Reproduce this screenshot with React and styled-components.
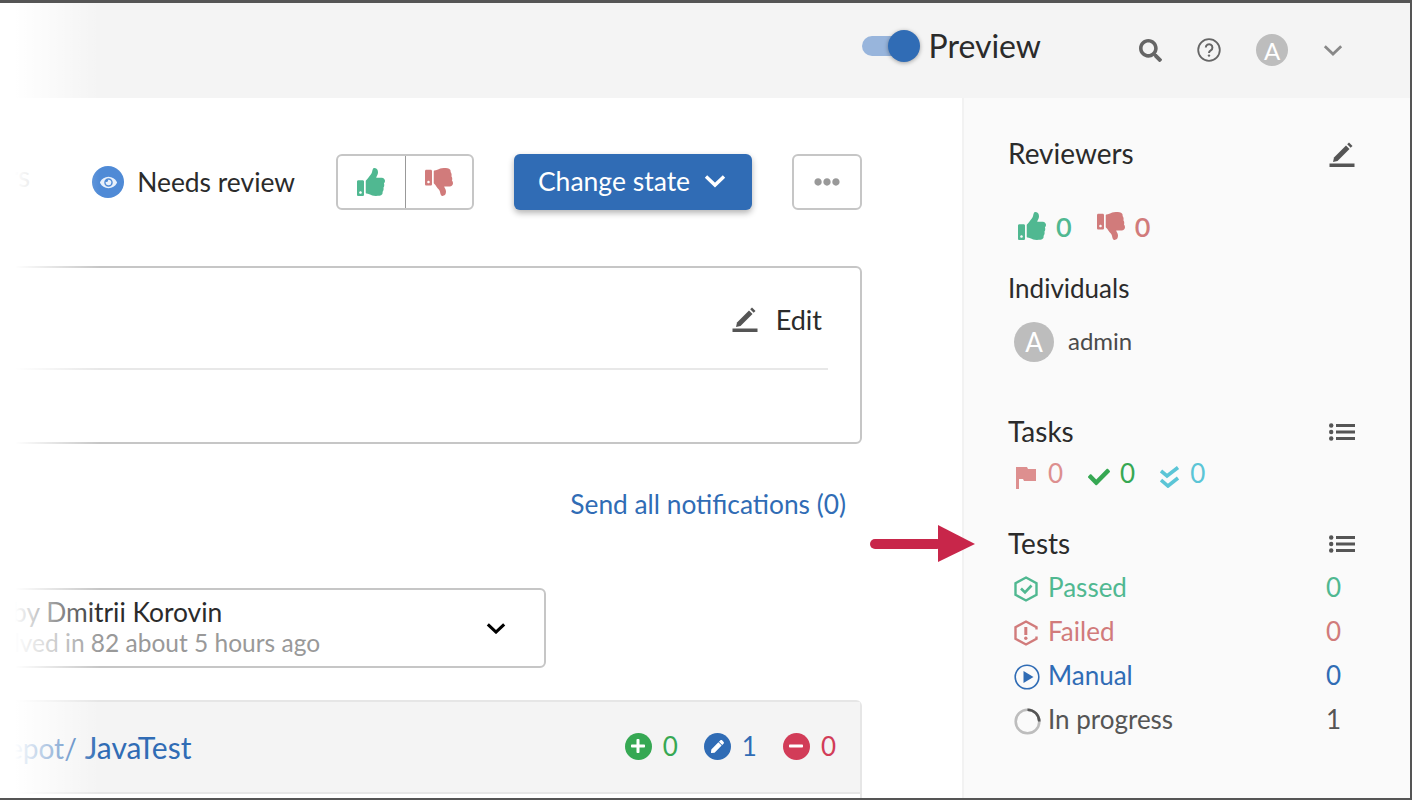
import React from 'react';
import styled, { createGlobalStyle } from 'styled-components';
import { FaThumbsUp, FaThumbsDown, FaSearch, FaCheck, FaEye, FaEllipsisH, FaPlus, FaMinus, FaPen } from 'react-icons/fa';

const colors = {
  text: '#2b2b2b',
  blue: '#306cb5',
  good: '#50b891',
  bad: '#d17b7b',
  green: '#36a853',
  cyan: '#5bc5d6',
  flag: '#dd8f8f',
  crimson: '#d23c58',
  grey: '#555555',
  line: '#c6c6c6',
};

const PenIcon = ({ size = 26 }) => (
  <svg width={size} height={size} viewBox="0 0 26 26" fill="#555">
    <path d="M5 16.5 L17 4.5 L20.5 8 L8.5 20 L4 21 Z" />
    <path d="M18.2 3.3 L20 1.5 L23.5 5 L21.7 6.8 Z" />
    <rect x="0.5" y="22.5" width="25" height="3.5" />
  </svg>
);

const ListIcon = () => (
  <svg width="26" height="18" viewBox="0 0 26 18" fill="#555">
    <circle cx="2.2" cy="2.5" r="2.2" />
    <circle cx="2.2" cy="9" r="2.2" />
    <circle cx="2.2" cy="15.5" r="2.2" />
    <rect x="7" y="1" width="19" height="3" />
    <rect x="7" y="7.5" width="19" height="3" />
    <rect x="7" y="14" width="19" height="3" />
  </svg>
);

const HelpIcon = () => (
  <svg width="24" height="24" viewBox="0 0 24 24" fill="none" stroke="#666" strokeWidth="1.8">
    <circle cx="12" cy="12" r="10.8" />
    <path d="M8.8 9.4a3.3 3.3 0 1 1 5 2.9c-1.2.7-1.8 1.2-1.8 2.6" strokeWidth="2" />
    <circle cx="12" cy="17.6" r="1.2" fill="#666" stroke="none" />
  </svg>
);

const Chevron = ({ color, size = 22, weight = 3 }) => (
  <svg width={size} height={size * 0.64} viewBox="0 0 22 14" fill="none" stroke={color} strokeWidth={weight}>
    <path d="M2 2.5 L11 11 L20 2.5" />
  </svg>
);

const FlagIcon = () => (
  <svg width="22" height="24" viewBox="0 0 22 24" fill={colors.flag}>
    <path d="M0 2 H11 L12 4 H20 V16 H8 L7 14 H3 V24 H0 Z" />
  </svg>
);

const DoubleCheck = () => (
  <svg width="20" height="22" viewBox="0 0 20 22" fill="none" stroke={colors.cyan} strokeWidth="3.6">
    <path d="M1 5 L7 10 L18 1.5" />
    <path d="M1 14 L8 20 L18 12" />
  </svg>
);

const PassedIcon = () => (
  <svg width="24" height="26" viewBox="0 0 24 26" fill="none" stroke={colors.good} strokeWidth="2.4">
    <path d="M12 1.5 L22.5 7.2 V18.8 L12 24.5 L1.5 18.8 V7.2 Z" />
    <path d="M7 12.5 L11 16.5 L17.5 9.5" strokeWidth="2.6" />
  </svg>
);

const FailedIcon = () => (
  <svg width="24" height="26" viewBox="0 0 24 26" fill="none" stroke={colors.bad} strokeWidth="2.4">
    <path d="M22.5 9.5 V7.2 L12 1.5 L1.5 7.2 V18.8 L12 24.5 L22.5 18.8 V16.5" />
    <path d="M11.8 7 V15" strokeWidth="3" />
    <circle cx="11.8" cy="18.3" r="1.7" fill={colors.bad} stroke="none" />
  </svg>
);

const ManualIcon = () => (
  <svg width="26" height="26" viewBox="0 0 26 26" fill="none" stroke={colors.blue} strokeWidth="1.6">
    <circle cx="13" cy="13" r="11.8" />
    <path d="M9.5 7 L19.5 13 L9.5 19 Z" fill={colors.blue} stroke="none" />
  </svg>
);

const ProgressIcon = () => (
  <svg width="27" height="27" viewBox="0 0 27 27" fill="none" strokeWidth="2.6">
    <circle cx="13.5" cy="13.5" r="11.8" stroke="#bdbdbd" />
    <path d="M13.5 1.7 A11.8 11.8 0 0 1 25.3 13.5" stroke="#555" />
  </svg>
);

const Arrow = () => (
  <ArrowWrap>
    <svg width="106" height="38" viewBox="0 0 106 38" fill="#c8264a">
      <rect x="0" y="14" width="72" height="10" rx="5" />
      <path d="M68 0 L105 19 L68 37 Z" />
    </svg>
  </ArrowWrap>
);

const tests = [
  { label: 'Passed', count: 0, color: colors.good, icon: <PassedIcon /> },
  { label: 'Failed', count: 0, color: colors.bad, icon: <FailedIcon /> },
  { label: 'Manual', count: 0, color: colors.blue, icon: <ManualIcon /> },
  { label: 'In progress', count: 1, color: colors.grey, icon: <ProgressIcon /> },
];

const App = () => {
  return (
    <Frame>
      <GlobalStyle />
      <Header>
        <Toggle>
          <ToggleKnob />
        </Toggle>
        <PreviewLabel>Preview</PreviewLabel>
        <HeaderIcons>
          <FaSearch size={23} color="#666" />
          <HelpIcon />
          <Avatar $size={32} $font={24}>A</Avatar>
          <Chevron color="#888" size={20} />
        </HeaderIcons>
      </Header>
      <Body>
        <Main>
          <StatusRow>
            <Faint>rs</Faint>
            <StatusLabel>
              <EyeBadge><FaEye size={17} color="#e8f0fb" /></EyeBadge>
              Needs review
            </StatusLabel>
            <VoteGroup>
              <VoteButton><FaThumbsUp size={28} color={colors.good} /></VoteButton>
              <VoteButton $divided><FaThumbsDown size={28} color={colors.bad} /></VoteButton>
            </VoteGroup>
            <PrimaryButton>
              Change state
              <Chevron color="#fff" size={22} weight={3.4} />
            </PrimaryButton>
            <MoreButton><FaEllipsisH size={26} color="#999" /></MoreButton>
          </StatusRow>

          <DescriptionCard>
            <EditRow>
              <PenIcon />
              <EditText>Edit</EditText>
            </EditRow>
            <Divider />
          </DescriptionCard>

          <NotifyRow>Send all notifications (0)</NotifyRow>

          <RevisionBox>
            <RevisionText>
              <RevisionName>by Dmitrii Korovin</RevisionName>
              <RevisionMeta>lved in 82 about 5 hours ago</RevisionMeta>
            </RevisionText>
            <Chevron color="#000" size={20} weight={3.4} />
          </RevisionBox>

          <FileCard>
            <FileHeader>
              <FilePath><FileDir>epot/</FileDir>JavaTest</FilePath>
              <FileStats>
                <Stat $color={colors.green}>
                  <StatBadge $color={colors.green}><FaPlus size={16} color="#fff" /></StatBadge>0
                </Stat>
                <Stat $color={colors.blue}>
                  <StatBadge $color={colors.blue}><FaPen size={13} color="#fff" /></StatBadge>1
                </Stat>
                <Stat $color={colors.crimson}>
                  <StatBadge $color={colors.crimson}><FaMinus size={16} color="#fff" /></StatBadge>0
                </Stat>
              </FileStats>
            </FileHeader>
          </FileCard>
        </Main>

        <Sidebar>
          <SectionHead>
            <SectionTitle>Reviewers</SectionTitle>
            <PenIcon />
          </SectionHead>
          <VoteCounts>
            <VoteCount $color={colors.good}><FaThumbsUp size={28} />0</VoteCount>
            <VoteCount $color={colors.bad}><FaThumbsDown size={28} />0</VoteCount>
          </VoteCounts>
          <SubHead>Individuals</SubHead>
          <Person>
            <Avatar $size={40} $font={26}>A</Avatar>
            <PersonName>admin</PersonName>
          </Person>

          <TasksHead>
            <SectionTitle>Tasks</SectionTitle>
            <ListIcon />
          </TasksHead>
          <TaskCounts>
            <TaskCount $color={colors.flag}><FlagIcon />0</TaskCount>
            <TaskCount $color={colors.green}><FaCheck size={22} />0</TaskCount>
            <TaskCount $color={colors.cyan}><DoubleCheck />0</TaskCount>
          </TaskCounts>

          <TestsHead>
            <SectionTitle>Tests</SectionTitle>
            <ListIcon />
          </TestsHead>
          <TestList>
            {tests.map(t => (
              <TestRow key={t.label} $color={t.color}>
                <TestIcon>{t.icon}</TestIcon>
                <TestLabel>{t.label}</TestLabel>
                <span>{t.count}</span>
              </TestRow>
            ))}
          </TestList>
        </Sidebar>
        <Arrow />
      </Body>
      <Fade />
    </Frame>
  );
};

const GlobalStyle = createGlobalStyle`
  html, body {
    margin: 0;
    padding: 0;
    background: white;
  }
  body {
    font-family: Lato, "Noto Sans", sans-serif;
    color: ${colors.text};
  }
  * {
    box-sizing: border-box;
  }
`;

const Frame = styled.div`
  position: relative;
  width: 1412px;
  height: 800px;
  overflow: hidden;
  display: flex;
  flex-direction: column;
  border-top: 3px solid ${colors.grey};
  border-right: 2px solid ${colors.grey};
  border-bottom: 2px solid ${colors.grey};
`;

const Fade = styled.div`
  position: absolute;
  left: 0;
  top: -3px;
  bottom: -2px;
  width: 100px;
  background: linear-gradient(to right, #fff 15px, rgba(255, 255, 255, 0) 100%);
  pointer-events: none;
`;

const Header = styled.header`
  flex: 0 0 95px;
  background: #f4f4f4;
  display: flex;
  align-items: center;
  justify-content: flex-end;
  padding: 0 67px 10px 0;
`;

const Toggle = styled.div`
  position: relative;
  width: 50px;
  height: 20px;
  border-radius: 10px;
  background: #98b5dc;
  margin-right: 16px;
`;

const ToggleKnob = styled.div`
  position: absolute;
  right: -8px;
  top: -6px;
  width: 32px;
  height: 32px;
  border-radius: 50%;
  background: ${colors.blue};
  box-shadow: 0 1px 4px rgba(0, 0, 0, 0.35);
`;

const PreviewLabel = styled.div`
  font-size: 32px;
  line-height: 40px;
  margin-right: 98px;
`;

const HeaderIcons = styled.div`
  display: flex;
  align-items: center;
  gap: 35px;
  margin-top: 9px;
`;

const Avatar = styled.div`
  width: ${p => p.$size}px;
  height: ${p => p.$size}px;
  border-radius: 50%;
  background: #bdbdbd;
  color: #fff;
  font-size: ${p => p.$font}px;
  display: flex;
  align-items: center;
  justify-content: center;
`;

const Body = styled.div`
  position: relative;
  flex: 1;
  display: flex;
  min-height: 0;
`;

const Main = styled.main`
  flex: 0 0 962px;
  background: #fff;
  padding: 56px 100px 0 0;
  overflow: hidden;
`;

const StatusRow = styled.div`
  display: flex;
  align-items: center;
  justify-content: flex-end;
  gap: 40px;
  height: 56px;
`;

const Faint = styled.span`
  font-size: 28px;
  color: #999;
  margin-right: auto;
  padding-left: 8px;
  margin-top: -12px;
`;

const StatusLabel = styled.div`
  display: flex;
  align-items: center;
  gap: 13px;
  font-size: 26.4px;
  margin-right: 1px;
`;

const EyeBadge = styled.span`
  width: 32px;
  height: 32px;
  border-radius: 50%;
  background: #4f8ad6;
  display: flex;
  align-items: center;
  justify-content: center;
`;

const VoteGroup = styled.div`
  display: flex;
  width: 138px;
  height: 56px;
  border: 2px solid ${colors.line};
  border-radius: 6px;
`;

const VoteButton = styled.div`
  flex: 1;
  display: flex;
  align-items: center;
  justify-content: center;
  border-left: ${p => (p.$divided ? '1px solid #999' : 'none')};
`;

const PrimaryButton = styled.div`
  width: 238px;
  height: 56px;
  border-radius: 6px;
  background: ${colors.blue};
  color: #fff;
  font-size: 26.5px;
  display: flex;
  align-items: center;
  justify-content: center;
  gap: 14px;
  padding: 0 2px 2px 0;
  box-shadow: 0 3px 6px rgba(0, 0, 0, 0.3);
`;

const MoreButton = styled.div`
  width: 70px;
  height: 56px;
  border: 2px solid ${colors.line};
  border-radius: 6px;
  display: flex;
  align-items: center;
  justify-content: center;
`;

const DescriptionCard = styled.section`
  margin: 56px 0 0 -4px;
  height: 178px;
  border: 2px solid ${colors.line};
  border-radius: 6px;
  padding: 35px 32px 0 0;
`;

const EditRow = styled.div`
  display: flex;
  align-items: center;
  justify-content: flex-end;
  gap: 18px;
  height: 32px;
  padding-right: 6px;
`;

const EditText = styled.span`
  font-size: 27px;
`;

const Divider = styled.div`
  height: 2px;
  background: #e8e8e8;
  margin-top: 33px;
`;

const NotifyRow = styled.div`
  margin-top: 44px;
  padding-right: 16px;
  text-align: right;
  font-size: 26.3px;
  line-height: 32px;
  color: ${colors.blue};
`;

const RevisionBox = styled.div`
  display: flex;
  align-items: center;
  justify-content: space-between;
  width: 550px;
  height: 80px;
  margin: 68px 0 0 -4px;
  padding: 0 38px 0 14px;
  border: 2px solid ${colors.line};
  border-radius: 6px;
`;

const RevisionText = styled.div`
  display: flex;
  flex-direction: column;
  margin-top: -2px;
`;

const RevisionName = styled.span`
  font-size: 26.4px;
  line-height: 32px;
`;

const RevisionMeta = styled.span`
  font-size: 24.5px;
  line-height: 30px;
  color: #999;
  margin-left: 2px;
`;

const FileCard = styled.section`
  margin: 32px 0 0 -4px;
  height: 200px;
  border: 2px solid #e6e6e6;
  border-radius: 6px;
`;

const FileHeader = styled.div`
  height: 92px;
  background: #f4f4f4;
  border-bottom: 2px solid #e6e6e6;
  display: flex;
  align-items: center;
  justify-content: space-between;
  padding: 0 24px 0 10px;
`;

const FilePath = styled.div`
  font-size: 30px;
  color: ${colors.blue};
`;

const FileDir = styled.span`
  font-size: 28px;
  margin-right: 8px;
`;

const FileStats = styled.div`
  display: flex;
  gap: 26px;
  margin-top: -2px;
`;

const Stat = styled.div`
  display: flex;
  align-items: center;
  gap: 11px;
  font-size: 26px;
  color: ${p => p.$color};
`;

const StatBadge = styled.span`
  width: 27px;
  height: 27px;
  border-radius: 50%;
  background: ${p => p.$color};
  display: flex;
  align-items: center;
  justify-content: center;
`;

const Sidebar = styled.aside`
  flex: 1;
  background: #fafafa;
  border-left: 2px solid #f2f2f2;
  padding: 36px 55px 0 44px;
`;

const SectionHead = styled.div`
  display: flex;
  align-items: center;
  justify-content: space-between;
  height: 40px;
`;

const SectionTitle = styled.h3`
  margin: -2px 0 0;
  font-size: 28px;
  font-weight: 400;
`;

const VoteCounts = styled.div`
  display: flex;
  gap: 25px;
  margin: 32px 0 0 10px;
  height: 40px;
  align-items: center;
`;

const VoteCount = styled.div`
  display: flex;
  align-items: center;
  gap: 10px;
  font-size: 27px;
  font-weight: 600;
  color: ${p => p.$color};
`;

const SubHead = styled.div`
  margin-top: 26px;
  font-size: 26px;
  line-height: 32px;
`;

const Person = styled.div`
  display: flex;
  align-items: center;
  gap: 14px;
  margin: 18px 0 0 6px;
`;

const PersonName = styled.span`
  font-size: 24px;
  color: #4a4a4a;
  margin-top: -3px;
`;

const TasksHead = styled(SectionHead)`
  margin-top: 50px;
`;

const TestsHead = styled(SectionHead)`
  margin-top: 33px;
`;

const TaskCounts = styled.div`
  display: flex;
  gap: 25px;
  margin: 3px 0 0 8px;
  height: 36px;
  align-items: center;
`;

const TaskCount = styled.div`
  display: flex;
  align-items: center;
  gap: 10px;
  font-size: 26px;
  line-height: 28px;
  color: ${p => p.$color};

  svg {
    margin-top: 8px;
  }
`;

const TestList = styled.div`
  display: flex;
  flex-direction: column;
  margin-top: 1px;
`;

const TestRow = styled.div`
  display: flex;
  align-items: center;
  height: 44px;
  padding: 0 14px 0 6px;
  font-size: 26px;
  color: ${p => p.$color};
`;

const TestIcon = styled.span`
  width: 34px;
  display: flex;
  flex-shrink: 0;
  padding-top: 4px;
`;

const TestLabel = styled.span`
  flex: 1;
`;

const ArrowWrap = styled.div`
  position: absolute;
  left: 870px;
  top: 427px;
  display: flex;
`;

export default App;
